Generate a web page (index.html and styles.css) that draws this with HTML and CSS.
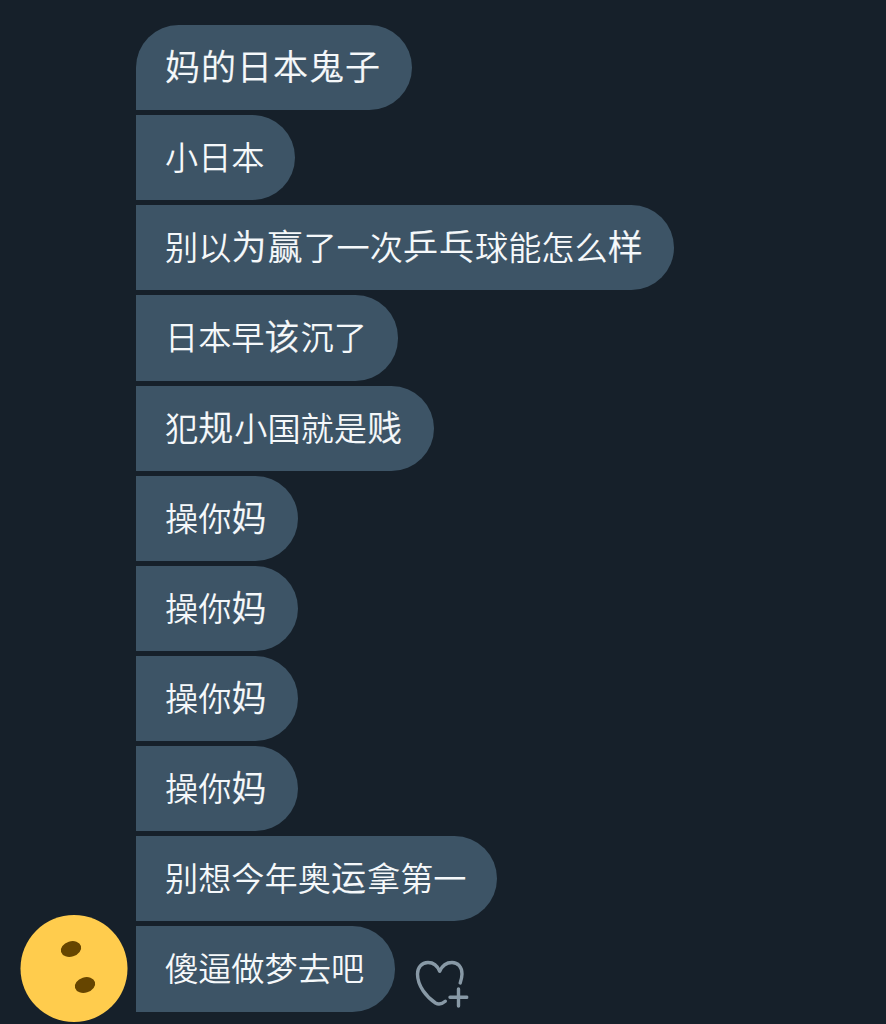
FILE: index.html
```html
<!DOCTYPE html>
<html lang="zh-CN">
<head>
<meta charset="utf-8">
<title>Messages</title>
<link rel="stylesheet" href="styles.css">
</head>
<body>
<main class="chat">
  <svg class="avatar" viewBox="0 0 108 108" aria-hidden="true">
    <circle cx="54" cy="54.5" r="53.5" fill="#ffcc4d"/>
    <ellipse cx="51" cy="35" rx="10.4" ry="7.6" fill="#664500" transform="rotate(-17 51 35)"/>
    <ellipse cx="65" cy="71" rx="10.4" ry="7.6" fill="#664500" transform="rotate(-17 65 71)"/>
  </svg>
  <div class="messages">
    <p class="bubble"><span class="wide">妈的日本鬼子</span></p>
    <p class="bubble">小日本</p>
    <p class="bubble">别以<span class="wide">为赢</span>了一次<span class="wide">乒乓</span>球能怎么<span class="wide">样</span></p>
    <p class="bubble">日本早<span class="wide">该</span>沉了</p>
    <p class="bubble">犯<span class="wide">规</span>小国就是<span class="wide">贱</span></p>
    <p class="bubble">操你<span class="wide">妈</span></p>
    <p class="bubble">操你<span class="wide">妈</span></p>
    <p class="bubble">操你<span class="wide">妈</span></p>
    <p class="bubble">操你<span class="wide">妈</span></p>
    <p class="bubble">别想今年奥<span class="wide">运</span>拿第一</p>
    <p class="bubble" lang="ja">傻逼做梦去吧</p>
  </div>
  <svg class="react" viewBox="0 0 54 48" aria-hidden="true">
    <path d="M45.700 23C46.700 20 47.500 17 47.500 14C47.500 7 43.500 2.500 37.500 2.500C31.500 2.500 27.500 6 25.200 11.300C23 6 19 2.500 13.500 2.500C7 2.500 3 7.500 3 14C3 26 12 37 21 43C24.500 45 27.500 44 30.800 41.200M44 29V46M35.500 37.200H52.500" fill="none" stroke="#8899a6" stroke-width="3.4" stroke-linecap="round" stroke-linejoin="round"/>
  </svg>
</main>
</body>
</html>
```
FILE: styles.css
```css
body {
  margin: 0;
  background: #16202a;
  overflow: hidden;
}

.chat {
  display: flex;
  align-items: flex-end;
  box-sizing: border-box;
  height: 1024px;
  padding: 25px 0 2px 20px;
}

.avatar {
  flex: none;
  width: 108px;
  height: 108px;
  overflow: visible;
}

.messages {
  display: flex;
  flex-direction: column;
  align-items: flex-start;
  align-self: flex-start;
  gap: 5px;
  margin-left: 8px;
}

.bubble {
  box-sizing: border-box;
  height: 85.15px;
  margin: 0;
  padding: 0 30.6px 0 29px;
  border-radius: 0 42.5px 42.5px 0;
  background: #3d5466;
  color: #f5f8fa;
  font-family: "Noto Sans CJK JP", "Noto Sans CJK SC", sans-serif;
  font-size: 33.2px;
  font-weight: 350;
  line-height: 81px;
  white-space: nowrap;
}

.bubble:first-child {
  border-top-left-radius: 42.5px;
}

.wide {
  font-family: "Noto Sans CJK SC", sans-serif;
  font-size: 35px;
  letter-spacing: 1px;
  line-height: 1;
  -webkit-text-stroke: 0.2px #f5f8fa;
}

.react {
  flex: none;
  width: 54px;
  height: 48px;
  margin: 0 0 14px -260px;
  transform: translateX(0.5px);
}
```
